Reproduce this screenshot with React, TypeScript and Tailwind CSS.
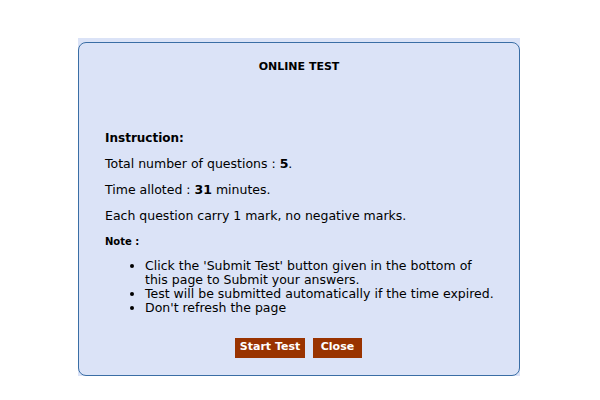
export default function App() {
  const notes = [
    "Click the 'Submit Test' button given in the bottom of this page to Submit your answers.",
    "Test will be submitted automatically if the time expired.",
    "Don't refresh the page",
  ];

  return (
    <div className="h-[400px] w-[600px] bg-white pt-[38px] font-['DejaVu_Sans',Verdana,sans-serif] text-black">
      <div className="ml-[78px] w-[442px] bg-[#dbe3f7] pt-1">
        <div className="h-[334px] rounded-lg border border-[#3a6ea5] bg-[#dbe3f7] pl-[26px] pr-[22px]">
          <h1 className="mt-[16px] pr-[4px] text-center text-[11px] font-bold">ONLINE TEST</h1>
          <h2 className="mt-[53px] text-[12px] font-bold">Instruction:</h2>
          <p className="mt-[9px] text-[12.5px] leading-[16px]">
            Total number of questions : <b>5</b>.
          </p>
          <p className="mt-[10px] text-[12.5px] leading-[16px]">
            Time alloted : <b>31</b> minutes.
          </p>
          <p className="mt-[10px] text-[12.5px] leading-[16px]">
            Each question carry 1 mark, no negative marks.
          </p>
          <p className="mt-[10px] text-[10px] font-bold">Note :</p>
          <ul className="mt-[10px] list-disc pl-[40px] text-[12.5px] leading-[14px]">
            {notes.map((n) => (
              <li key={n}>{n}</li>
            ))}
          </ul>
          <div className="mt-[23px] flex justify-center gap-2 pr-[5px]">
            <button className="h-[20px] w-[70px] bg-[#993300] text-[11px] font-bold text-white">Start Test</button>
            <button className="h-[20px] w-[49px] bg-[#993300] text-[11px] font-bold text-white">Close</button>
          </div>
        </div>
      </div>
    </div>
  );
}
